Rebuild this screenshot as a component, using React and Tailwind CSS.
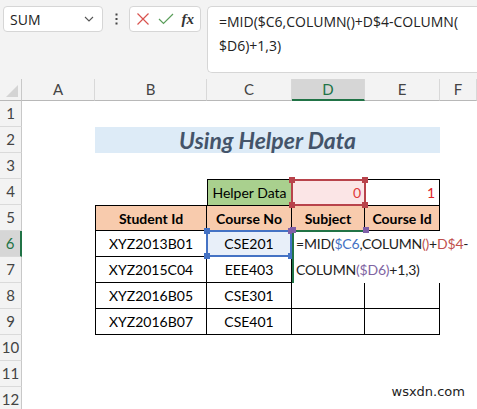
import React from "react";

const cols = ["A", "B", "C", "D", "E", "F"];

const Handle = ({ className }) => (
  <span className={`absolute w-[6px] h-[6px] ${className}`} />
);

const RowHead = ({ n, active }) => (
  <div
    className={`flex items-center justify-center border-b border-[#dadada] text-[15px] ${
      active
        ? "bg-[#d6d6d6] text-[#217346] border-r-2 border-r-[#217346]"
        : "bg-[#f3f3f3] text-[#444] border-r border-r-[#c8c8c8]"
    }`}
  >
    {n}
  </div>
);

const Cell = ({ children, className = "" }) => (
  <div className={`flex items-center justify-center text-[14px] text-black ${className}`}>
    {children}
  </div>
);

export default function App() {
  const rows = [
    ["XYZ2013B01", "CSE201"],
    ["XYZ2015C04", "EEE403"],
    ["XYZ2016B05", "CSE301"],
    ["XYZ2016B07", "CSE401"],
  ];

  return (
    <div className="w-[477px] h-[409px] overflow-hidden bg-white relative" style={{ fontFamily: "Lato, 'Liberation Sans', sans-serif" }}>
      {/* Toolbar */}
      <div className="h-[79px] bg-[#f3f3f3] flex items-start pt-[6px] pl-[3px] gap-[6px]" style={{ fontFamily: "'Open Sans', 'Liberation Sans', sans-serif" }}>
        <div className="w-[100px] h-[26px] bg-white border border-[#d6d6d6] rounded-[4px] flex items-center justify-between pl-[6px] pr-[8px] text-[14px] text-[#222]">
          <span>SUM</span>
          <svg width="10" height="6" viewBox="0 0 10 6" fill="none" stroke="#555" strokeWidth="1.1">
            <path d="M1 1l4 4 4-4" />
          </svg>
        </div>
        <div className="w-[14px] h-[26px] flex items-center justify-center">
          <svg width="3" height="12" viewBox="0 0 3 12" fill="#444">
            <rect x="0.5" y="0.5" width="2" height="2" />
            <rect x="0.5" y="5" width="2" height="2" />
            <rect x="0.5" y="9.5" width="2" height="2" />
          </svg>
        </div>
        <div className="w-[72px] h-[26px] bg-white border border-[#d6d6d6] rounded-[4px] flex items-center justify-between px-[6px]">
          <svg width="14" height="14" viewBox="0 0 14 14" stroke="#d9534f" strokeWidth="1.2">
            <path d="M1.5 1.5l11 11M12.5 1.5l-11 11" />
          </svg>
          <svg width="16" height="12" viewBox="0 0 16 12" fill="none" stroke="#5a9e5a" strokeWidth="1.2">
            <path d="M1 6l4.5 4.5L15 1" />
          </svg>
          <span className="text-[15px] italic text-[#333]" style={{ fontFamily: "'Liberation Serif', serif" }}>
            <i className="font-semibold">fx</i>
          </span>
        </div>
        <div className="flex-1 h-[67px] bg-white border border-[#d6d6d6] rounded-l-[5px] border-r-0 pl-[11px] pt-[3px] text-[14px] leading-[24px] text-[#222]">
          =MID($C6,COLUMN()+D$4-COLUMN(
          <br />
          $D6)+1,3)
        </div>
      </div>

      {/* Sheet */}
      <div className="grid grid-cols-[22px_73px_112px_85px_73px_75px_1fr] grid-rows-[22px] auto-rows-[26px]">
        {/* Column header */}
        <div className="bg-[#f3f3f3] border-b border-[#b8b8b8] border-r border-r-[#c8c8c8] relative">
          <span className="absolute right-[3px] bottom-[3px] w-0 h-0 border-l-[12px] border-l-transparent border-b-[12px] border-b-[#d4d4d4]" />
        </div>
        {cols.map((c) => (
          <div
            key={c}
            className={`flex items-center justify-center text-[15px] border-r border-r-[#d8d8d8] ${
              c === "D"
                ? "bg-[#d6d6d6] text-[#217346] border-b-2 border-b-[#217346]"
                : "bg-[#f3f3f3] text-[#444] border-b border-b-[#b8b8b8]"
            }`}
          >
            {c}
          </div>
        ))}

        {/* Row 1 */}
        <RowHead n={1} />
        <div className="col-span-6" />

        {/* Row 2 */}
        <RowHead n={2} />
        <div />
        <div className="col-span-4 bg-[#ddebf7] flex items-center justify-center text-[23px] font-bold italic text-[#44546a]">
          Using Helper Data
        </div>
        <div />

        {/* Row 3 */}
        <RowHead n={3} />
        <div className="col-span-6" />

        {/* Row 4 */}
        <RowHead n={4} />
        <div />
        <div />
        <Cell className="bg-[#a9d08e] border-t border-l border-r border-black">Helper Data</Cell>
        <div className="relative bg-[#fbe5e6] border-t border-black flex items-center justify-end pr-[4px] text-[14px] text-[#e03a3a]">
          0
          <div className="absolute -left-[1px] -top-[1px] -right-[1px] -bottom-[1px] border-2 border-[#b8434b]">
            <Handle className="-left-[4px] -top-[4px] bg-[#b8434b]" />
            <Handle className="-right-[4px] -top-[4px] bg-[#b8434b]" />
            <Handle className="-left-[4px] -bottom-[4px] bg-[#b8434b]" />
            <Handle className="-right-[4px] -bottom-[4px] bg-[#b8434b]" />
          </div>
        </div>
        <div className="border-t border-r border-black flex items-center justify-end pr-[4px] text-[14px] text-[#e02424]">
          1
        </div>
        <div />

        {/* Row 5 */}
        <RowHead n={5} />
        <div />
        <Cell className="bg-[#f8cbad] border-t border-l border-r border-b border-black font-bold">Student Id</Cell>
        <Cell className="bg-[#f8cbad] border-t border-r border-b border-black font-bold">Course No</Cell>
        <Cell className="bg-[#f8cbad] border-t border-r border-b border-black font-bold">Subject</Cell>
        <Cell className="bg-[#f8cbad] border-t border-r border-b border-black font-bold">Course Id</Cell>
        <div />

        {/* Rows 6-9 */}
        {rows.map(([id, course], i) => {
          const r = i + 6;
          return (
            <React.Fragment key={r}>
              <RowHead n={r} active={r === 6} />
              <div />
              <Cell className="border-l border-r border-b border-black">{id}</Cell>
              {r === 6 ? (
                <div className="relative bg-[#e8eff9] border-r border-b border-black flex items-center justify-center text-[14px]">
                  {course}
                  <div className="absolute -left-[1px] -top-[1px] -right-[1px] -bottom-[1px] border-2 border-[#4472c4]">
                    <Handle className="-left-[4px] -top-[4px] bg-[#4472c4]" />
                    <Handle className="-right-[4px] -top-[4px] bg-[#7f60a8]" />
                    <Handle className="-left-[4px] -bottom-[4px] bg-[#4472c4]" />
                    <Handle className="-right-[4px] -bottom-[4px] bg-[#4472c4]" />
                  </div>
                </div>
              ) : (
                <Cell className="border-r border-b border-black">{course}</Cell>
              )}
              {r === 6 && (
                <div className="col-span-2 row-span-2 relative z-10 bg-white border-l-2 border-[#217346] pl-[2px] text-[14px] tracking-[-0.2px] leading-[26px] text-[#222]">
                  <span className="absolute left-[-2px] right-[73px] -top-[1px] h-[2px] bg-[#217346]" />
                  <Handle className="-left-[4px] -top-[4px] bg-[#7f60a8]" />
                  <Handle className="left-[69px] -top-[4px] bg-[#7f60a8]" />
                  =MID(<span className="text-[#4472c4]">$C6</span>,COLUMN
                  <span className="text-[#c0504d]">()</span>+<span className="text-[#c0504d]">D$4</span>-
                  <br />
                  COLUMN<span className="text-[#8064a2]">($D6)</span>+1,3)
                </div>
              )}
              {r >= 8 && (
                <>
                  <div className="border-r border-b border-black" />
                  <div className="border-r border-b border-black" />
                </>
              )}
              <div />
            </React.Fragment>
          );
        })}

        {/* Rows 10-12 */}
        {[10, 11, 12].map((r) => (
          <React.Fragment key={r}>
            <RowHead n={r} />
            <div className="col-span-6" />
          </React.Fragment>
        ))}
      </div>

      <div className="absolute right-[12px] bottom-[8px] text-[13px] text-[#222]" style={{ fontFamily: "'DejaVu Sans', sans-serif" }}>
        wsxdn.com
      </div>
    </div>
  );
}
